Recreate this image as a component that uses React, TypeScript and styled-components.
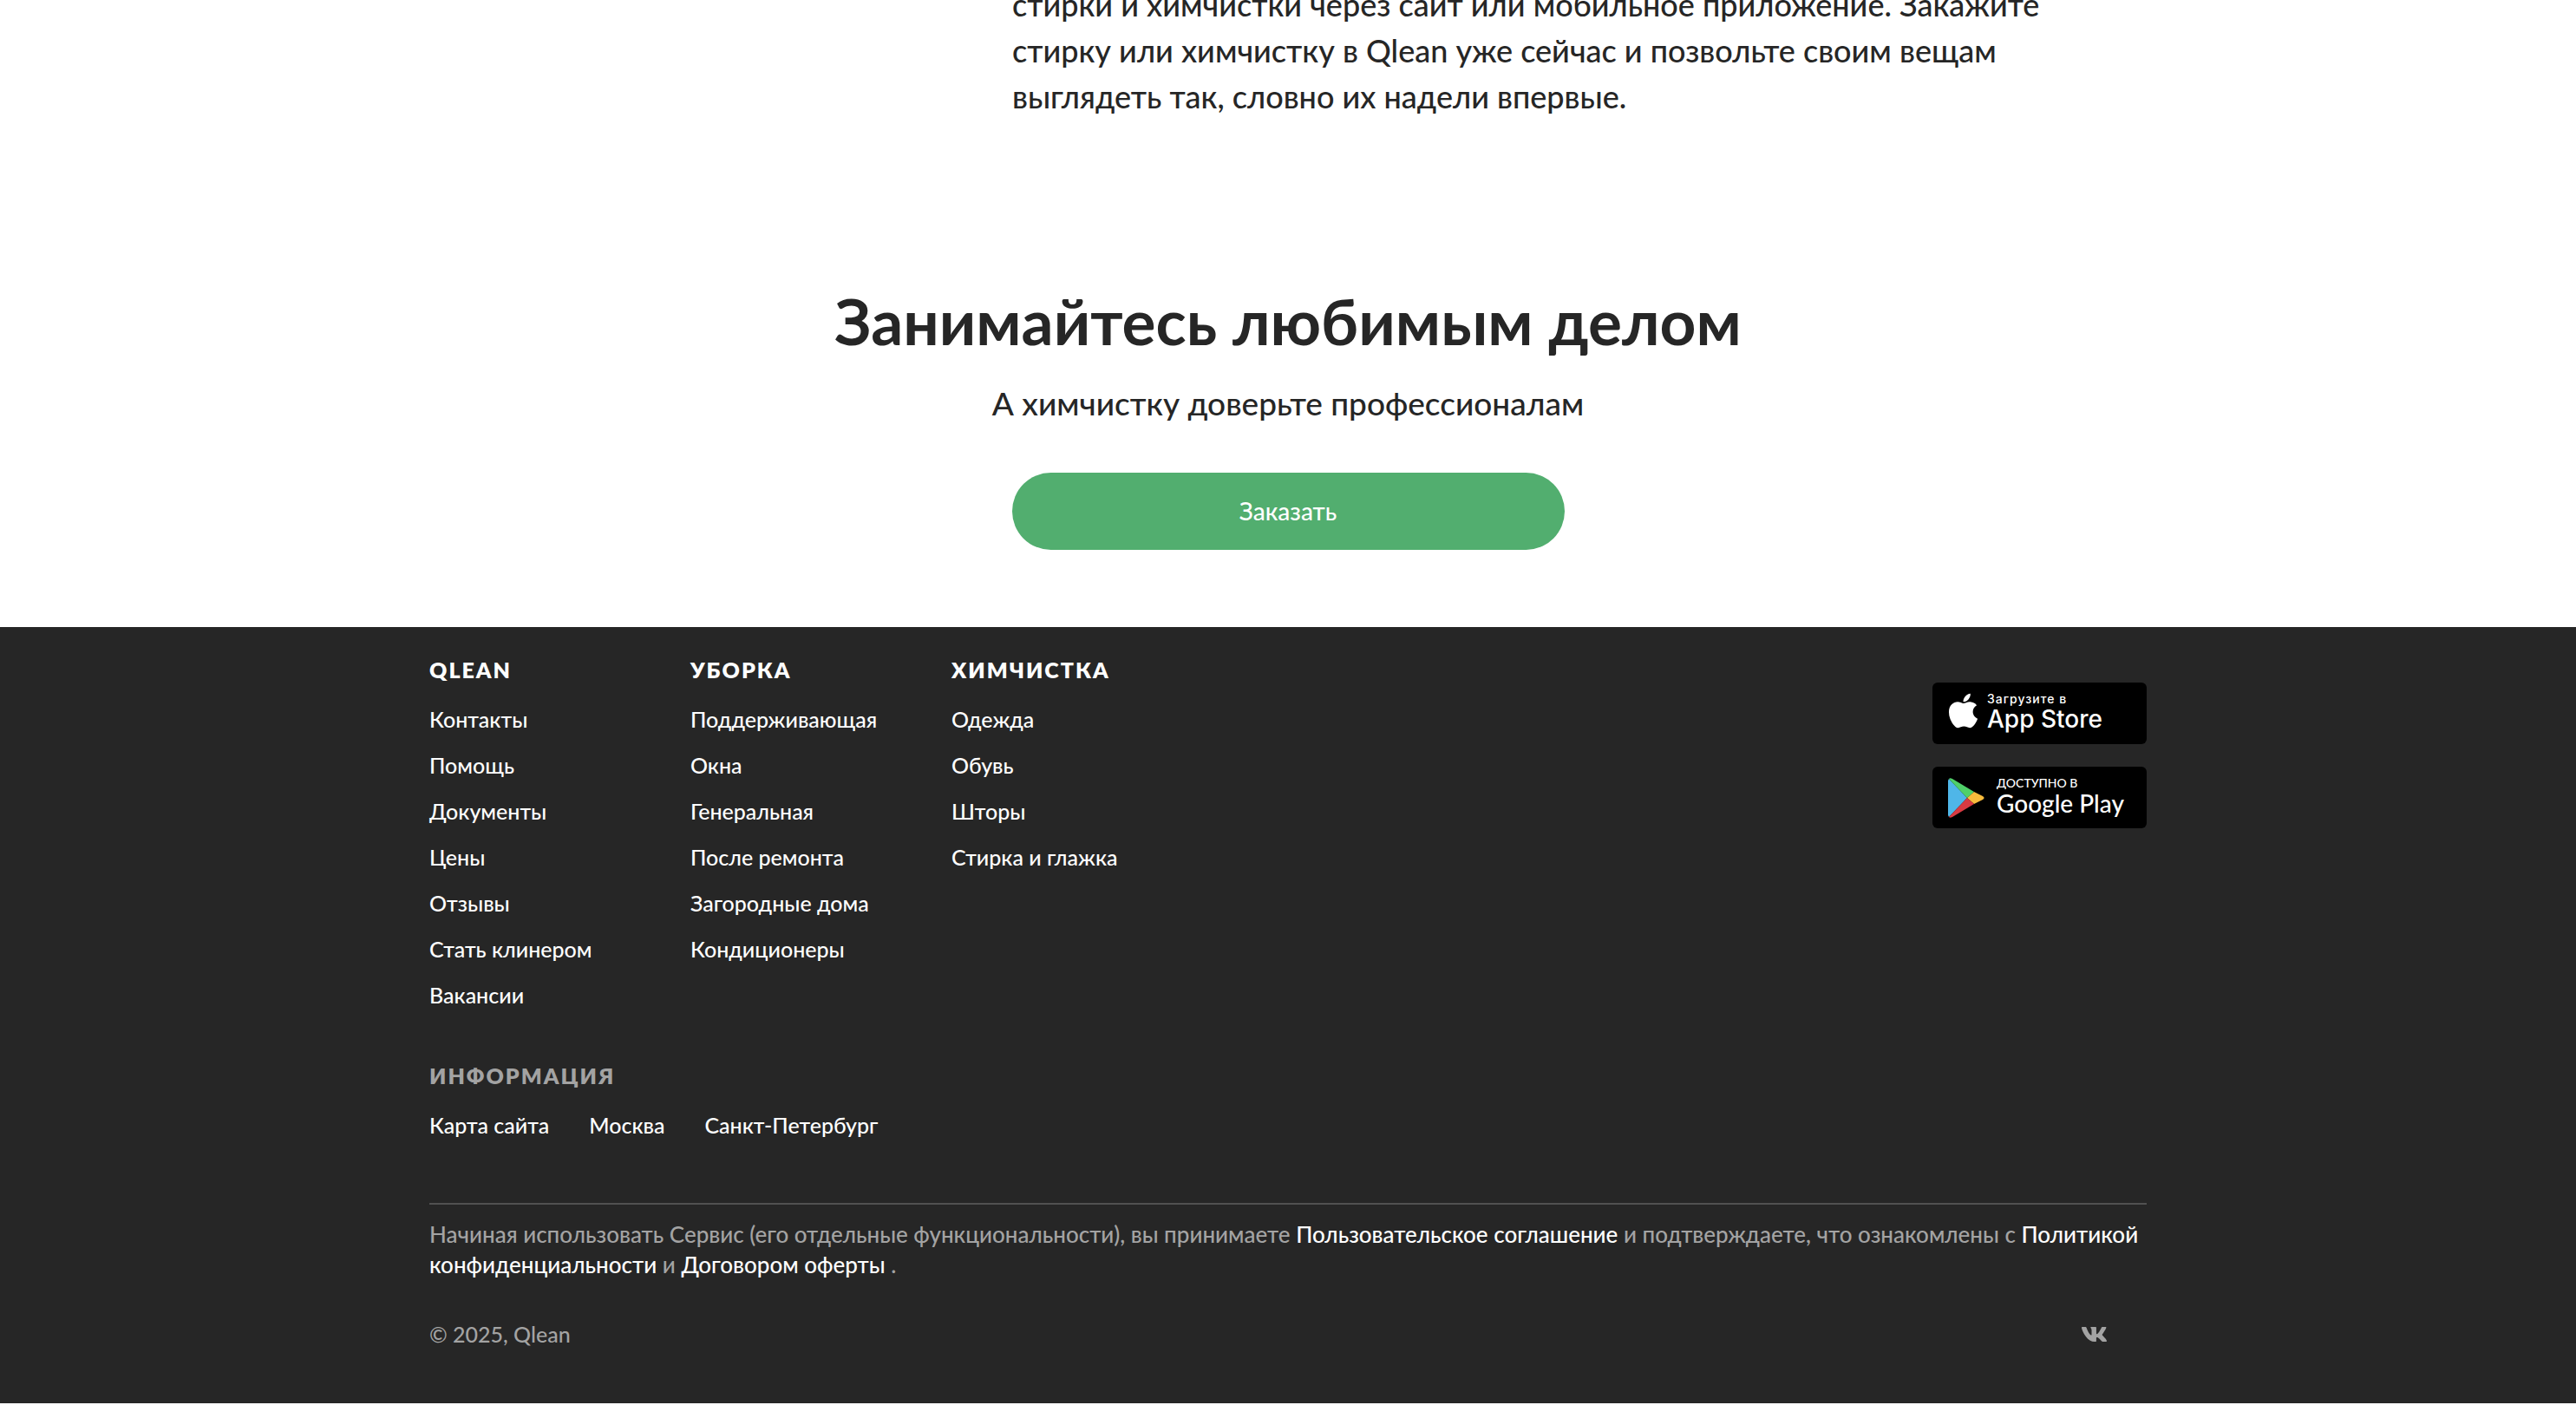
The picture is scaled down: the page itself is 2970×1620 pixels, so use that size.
import React from 'react';
import styled, { createGlobalStyle } from 'styled-components';
import { FaApple, FaVk } from 'react-icons/fa';

const GlobalStyle = createGlobalStyle`
  * { box-sizing: border-box; }
  body {
    margin: 0;
    background: #ffffff;
    color: #262626;
    font-family: Lato, 'Open Sans', sans-serif;
    font-size: 25px;
    font-weight: 500;
    line-height: 35px;
  }
`;

const Page = styled.div`
  overflow: hidden;
`;

const Container = styled.div`
  width: 100%;
  max-width: 1980px;
  margin: 0 auto;
`;

const Article = styled(Container)`
  margin-top: -21px;
  padding-left: 672px;
`;

const Paragraph = styled.p`
  max-width: 1240px;
  margin: 0;
  font-size: 36px;
  line-height: 53px;
`;

const Promo = styled.section`
  display: flex;
  flex-direction: column;
  align-items: center;
  padding: 188px 0 89px;
`;

const Title = styled.h2`
  margin: 0 0 24px;
  font-size: 73px;
  font-weight: 700;
  line-height: 88px;
`;

const Subtitle = styled.p`
  margin: 0 0 54px;
  font-size: 37px;
  line-height: 53px;
`;

const OrderButton = styled.button`
  width: 637px;
  height: 89px;
  border: 0;
  border-radius: 45px;
  background: #52ae6f;
  color: #ffffff;
  font: inherit;
  font-size: 28px;
  cursor: pointer;
`;

const Footer = styled.footer`
  padding: 32px 0 62px;
  background: #262626;
  color: #a3a3a3;
`;

const Top = styled.div`
  display: flex;
  justify-content: space-between;
`;

const Columns = styled.nav`
  display: grid;
  grid-template-columns: repeat(3, 301px);
`;

const Heading = styled.h3<{ $muted?: boolean }>`
  margin: 0 0 22px;
  color: ${(p) => (p.$muted ? '#a3a3a3' : '#ffffff')};
  font-size: 25px;
  font-weight: 800;
  line-height: 35px;
  letter-spacing: 2px;
  text-transform: uppercase;
`;

const List = styled.ul<{ $inline?: boolean }>`
  display: flex;
  flex-direction: ${(p) => (p.$inline ? 'row' : 'column')};
  gap: ${(p) => (p.$inline ? '46px' : '18px')};
  margin: 0;
  padding: 0;
  list-style: none;
`;

const Link = styled.a`
  color: #ffffff;
  text-decoration: none;
`;

const Stores = styled.div`
  display: flex;
  flex-direction: column;
  gap: 26px;
  padding-top: 32px;
`;

const Badge = styled.a<{ $store: 'apple' | 'google' }>`
  display: flex;
  align-items: center;
  gap: ${(p) => (p.$store === 'apple' ? 5 : 14)}px;
  width: 247px;
  height: 71px;
  padding-left: ${(p) => (p.$store === 'apple' ? 13 : 18)}px;
  border-radius: 6px;
  background: #000000;
  color: #ffffff;
  font-family: ${(p) => (p.$store === 'apple' ? 'Inter' : 'Lato')}, sans-serif;
  text-decoration: none;
  white-space: nowrap;
`;

const AppleLogo = styled(FaApple)`
  width: 45px;
  height: 45px;
  margin-bottom: 6px;
`;

const BadgeText = styled.span`
  display: flex;
  flex-direction: column;
  padding-bottom: 6px;
`;

const Small = styled.span<{ $spaced?: boolean }>`
  font-size: 14px;
  line-height: 18px;
  letter-spacing: ${(p) => (p.$spaced ? 1 : 0)}px;
`;

const Store = styled.span`
  font-size: 28px;
  line-height: 28px;
`;

const Info = styled.section`
  padding: 58px 0 72px;
`;

const Legal = styled.p`
  margin: 0;
  padding: 17px 0 45px;
  border-top: 2px solid #515151;
  font-size: 26px;
`;

const Bottom = styled.div`
  display: flex;
  align-items: center;
  justify-content: space-between;
  padding-right: 45px;
`;

const Social = styled.a`
  display: flex;
  color: #a3a3a3;
`;

const groups = [
  { title: 'Qlean', links: ['Контакты', 'Помощь', 'Документы', 'Цены', 'Отзывы', 'Стать клинером', 'Вакансии'] },
  { title: 'Уборка', links: ['Поддерживающая', 'Окна', 'Генеральная', 'После ремонта', 'Загородные дома', 'Кондиционеры'] },
  { title: 'Химчистка', links: ['Одежда', 'Обувь', 'Шторы', 'Стирка и глажка'] },
];

const LinkList = ({ items, inline }: { items: string[]; inline?: boolean }) => (
  <List $inline={inline}>
    {items.map((item) => (
      <li key={item}><Link href="#">{item}</Link></li>
    ))}
  </List>
);

const PlayLogo = () => (
  <svg width="42" height="46" viewBox="0 0 42 46" aria-hidden="true">
    <path d="M1 1 0 3v40l1 2 21-22z" fill="#4fb6e8" />
    <path d="M1 1c1-1 2-1 4 0l25 15-8 7z" fill="#4fd069" />
    <path d="M30 16l10 5c2 1 2 3 0 4l-10 5-8-7z" fill="#f8bb3c" />
    <path d="M1 45c1 1 2 1 4 0l25-15-8-7z" fill="#d83a42" />
  </svg>
);

export default function App() {
  return (
    <Page>
      <GlobalStyle />
      <main>
        <Article as="article">
          <Paragraph>
            стирки и химчистки через сайт или мобильное приложение. Закажите стирку или
            химчистку в Qlean уже сейчас и позвольте своим вещам выглядеть так, словно их
            надели впервые.
          </Paragraph>
        </Article>
        <Promo>
          <Title>Занимайтесь любимым делом</Title>
          <Subtitle>А химчистку доверьте профессионалам</Subtitle>
          <OrderButton type="button">Заказать</OrderButton>
        </Promo>
      </main>
      <Footer>
        <Container>
          <Top>
            <Columns>
              {groups.map((group) => (
                <div key={group.title}>
                  <Heading>{group.title}</Heading>
                  <LinkList items={group.links} />
                </div>
              ))}
            </Columns>
            <Stores>
              <Badge href="#" $store="apple">
                <AppleLogo aria-hidden="true" />
                <BadgeText>
                  <Small $spaced>Загрузите в</Small>
                  <Store>App Store</Store>
                </BadgeText>
              </Badge>
              <Badge href="#" $store="google">
                <PlayLogo />
                <BadgeText>
                  <Small>ДОСТУПНО В</Small>
                  <Store>Google Play</Store>
                </BadgeText>
              </Badge>
            </Stores>
          </Top>
          <Info>
            <Heading $muted>Информация</Heading>
            <LinkList inline items={['Карта сайта', 'Москва', 'Санкт-Петербург']} />
          </Info>
          <Legal>
            Начиная использовать Сервис (его отдельные функциональности), вы принимаете{' '}
            <Link href="#">Пользовательское соглашение</Link> и подтверждаете, что ознакомлены с{' '}
            <Link href="#">Политикой конфиденциальности</Link> и{' '}
            <Link href="#">Договором оферты</Link> .
          </Legal>
          <Bottom>
            <span>© 2025, Qlean</span>
            <Social href="#" aria-label="ВКонтакте">
              <FaVk size={31} aria-hidden="true" />
            </Social>
          </Bottom>
        </Container>
      </Footer>
    </Page>
  );
}
